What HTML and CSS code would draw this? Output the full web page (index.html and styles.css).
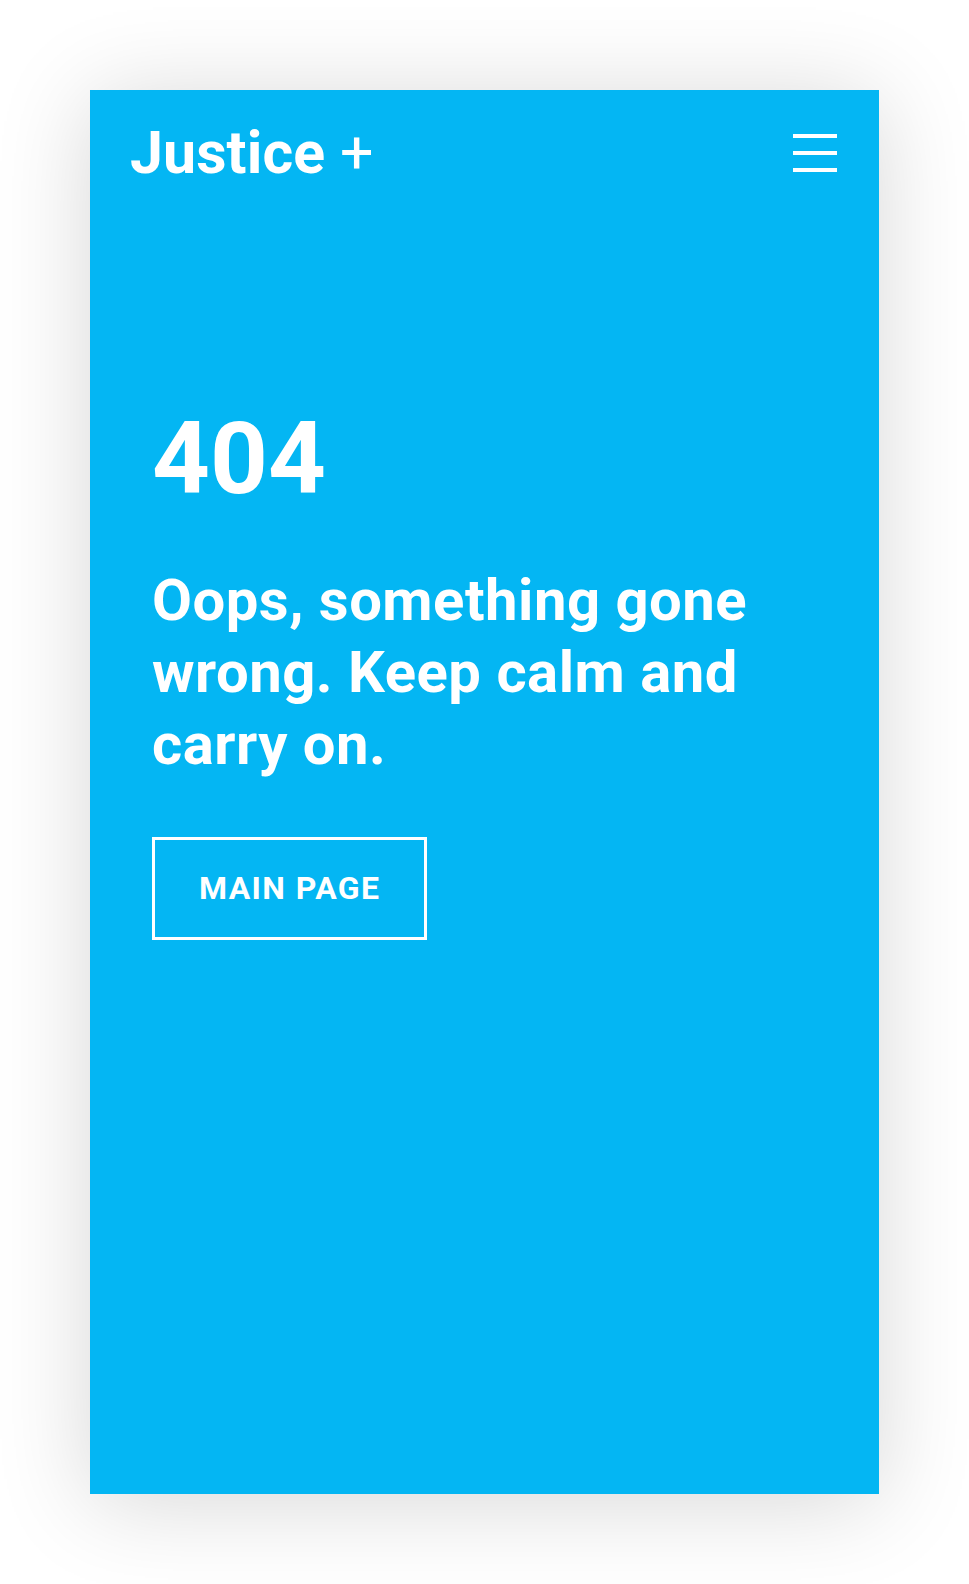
FILE: index.html
```html
<!DOCTYPE html>
<html lang="en">
<head>
<meta charset="utf-8">
<title>404 – Justice +</title>
<link rel="stylesheet" href="styles.css">
</head>
<body>
  <div class="card">
    <header class="header">
      <div class="logo">Justice <span class="logo-plus">+</span></div>
      <button class="menu" aria-label="Menu">
        <span class="menu-line"></span>
        <span class="menu-line"></span>
        <span class="menu-line"></span>
      </button>
    </header>
    <main class="content">
      <h1 class="code">404</h1>
      <h2 class="message">Oops, something gone wrong. Keep calm and carry on.</h2>
      <a class="btn" href="#">MAIN PAGE</a>
    </main>
  </div>
</body>
</html>
```
FILE: styles.css
```css
* { box-sizing: border-box; }

html, body {
  margin: 0;
  padding: 0;
  background: #ffffff;
}

body {
  font-family: Roboto, "Liberation Sans", Arial, sans-serif;
  color: #ffffff;
  padding: 90px 0 90px 90px;
}

.card {
  width: 789px;
  height: 1404px;
  background: #04b6f3;
  box-shadow: 0 8px 90px rgba(0, 0, 0, 0.16);
  display: flex;
  flex-direction: column;
}

.header {
  display: flex;
  justify-content: space-between;
  align-items: center;
  padding: 34px 42px 0 40px;
}

.logo {
  font-size: 59px;
  line-height: 58px;
  font-weight: 700;
  letter-spacing: 0.1px;
}

.logo-plus {
  font-weight: 400;
}

.menu {
  display: flex;
  flex-direction: column;
  gap: 13.5px;
  width: 44px;
  padding: 0;
  margin: 0;
  border: 0;
  background: transparent;
}

.menu-line {
  display: block;
  height: 3.5px;
  width: 44px;
  background: #ffffff;
}

.content {
  padding: 226px 62px 0 62px;
  display: flex;
  flex-direction: column;
  align-items: flex-start;
}

.code {
  margin: 0;
  font-size: 101px;
  line-height: 101px;
  font-weight: 700;
}

.message {
  margin: 55px 0 0 0;
  font-size: 58px;
  line-height: 72px;
  font-weight: 700;
  letter-spacing: 0.5px;
  max-width: 660px;
}

.btn {
  margin-top: 57px;
  display: inline-block;
  border: 3px solid #ffffff;
  padding: 32px 44px;
  font-size: 32px;
  line-height: 33px;
  font-weight: 700;
  letter-spacing: 1.4px;
  color: #ffffff;
  text-decoration: none;
}
```
